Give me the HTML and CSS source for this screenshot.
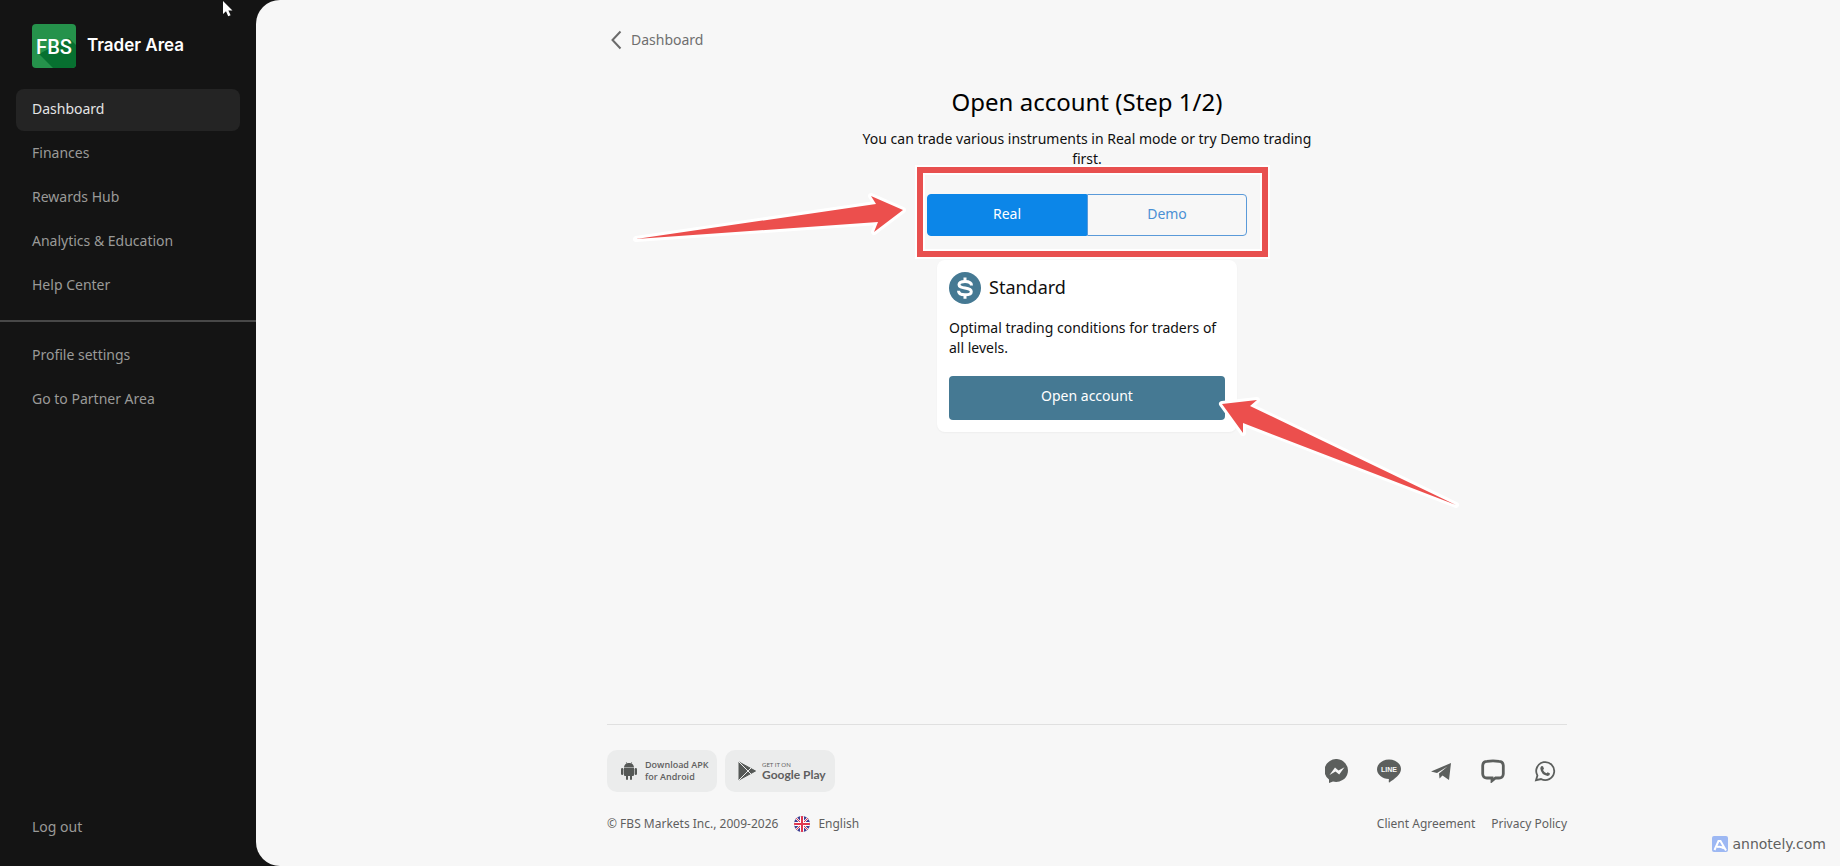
FILE: index.html
```
<!DOCTYPE html>
<html lang="en">
<head>
    <meta charset="UTF-8">
    <meta name="viewport" content="width=device-width, initial-scale=1.0">
    <title>Open account - Trader Area</title>
    <link rel="stylesheet" href="styles.css">
</head>
<body>
    <aside class="sidebar">
        <a href="#" class="brand">
            <svg class="brand-logo" viewBox="0 0 44 44">
                <rect width="44" height="44" rx="4" fill="#25924b"/>
                <path d="M7 30 L21 44 H40 a4 4 0 0 0 4-4 V21 L37 14 Z" fill="#077030"/>
                <text x="22" y="30" text-anchor="middle" class="brand-letters">FBS</text>
            </svg>
            <span class="brand-name">Trader Area</span>
        </a>
        <nav class="menu">
            <a href="#" class="active">Dashboard</a>
            <a href="#">Finances</a>
            <a href="#">Rewards Hub</a>
            <a href="#">Analytics &amp; Education</a>
            <a href="#">Help Center</a>
        </nav>
        <nav class="menu menu-secondary">
            <a href="#">Profile settings</a>
            <a href="#">Go to Partner Area</a>
        </nav>
        <nav class="menu menu-bottom">
            <a href="#">Log out</a>
        </nav>
    </aside>

    <main class="main">
        <div class="content">
            <a href="#" class="back">
                <svg width="12" height="20" viewBox="0 0 12 20" fill="none" stroke="#6b6b6b" stroke-width="2"><path d="M10.500 1.500 L2.500 10 L10.500 18.500"/></svg>
                Dashboard
            </a>

            <section class="account">
                <h1>Open account (Step 1/2)</h1>
                <p class="intro">You can trade various instruments in Real mode or try Demo trading first.</p>

                <div class="switch">
                    <button type="button" class="selected">Real</button>
                    <button type="button">Demo</button>
                    <div class="highlight"></div>
                    <svg class="arrow arrow-left" viewBox="0 0 280 60">
                        <path d="M6 48 L246 13 L241 5 L273 19 L244 41 L248 31 Z"/>
                    </svg>
                </div>

                <div class="card">
                    <h2>
                        <svg width="32" height="32" viewBox="0 0 32 32" fill="none" stroke="#fff" stroke-width="3">
                            <circle cx="16" cy="16" r="16" fill="#457993" stroke="none"/>
                            <path d="M22.500 13.500 C22.500 10.500 20.500 9.500 16 9.500 C11.800 9.500 10 10.600 10 12.700 C10 15 12.500 15.400 16 16 C20 16.600 22.300 17.200 22.300 19.700 C22.300 22 20 22.800 16 22.800 C11.500 22.800 9.500 21.800 9.500 18.800"/>
                            <path d="M16 5.500 V9.500 M16 22.500 V26.800"/>
                        </svg>
                        <span>Standard</span>
                    </h2>
                    <p>Optimal trading conditions for traders of all levels.</p>
                    <button type="button" class="open-button">Open account</button>
                    <svg class="arrow arrow-right" viewBox="0 0 250 120">
                        <path d="M6 12 L41 8 L34 14 L240 113 L27 31 L27 41 Z"/>
                    </svg>
                </div>
            </section>

            <footer class="footer">
                <div class="footer-row apps-row">
                    <div class="apps">
                        <a href="#" class="app">
                            <svg width="18" height="18" viewBox="-1 0 18 18" fill="#555856">
                                <path d="M3 5.500 C3 3.500 4.200 2 5.600 1.400 L4.800 .2 L5.200 0 L6.100 1.200 C7.300 .8 8.700 .8 9.900 1.200 L10.800 0 L11.200 .2 L10.400 1.400 C11.800 2 13 3.500 13 5.500 Z"/>
                                <path d="M3 6 H13 V13 a1 1 0 0 1-1 1 H11 V17 a1 1 0 0 1-2 0 V14 H7 V17 a1 1 0 0 1-2 0 V14 H4 a1 1 0 0 1-1-1 Z"/>
                                <rect x="0" y="6" width="2.400" height="7" rx="1.200"/>
                                <rect x="13.600" y="6" width="2.400" height="7" rx="1.200"/>
                            </svg>
                            <span class="apk-text">Download APK<br>for Android</span>
                        </a>
                        <a href="#" class="app">
                            <svg width="18" height="20" viewBox="0 0 18 20">
                                <path d="M1 1 L17.500 10 L1 19 Z" fill="#555856" stroke="#555856" stroke-linejoin="round"/>
                                <path d="M1 1 L13 13 M1 19 L13 7" stroke="#ebecec" stroke-width="1"/>
                            </svg>
                            <span class="play-text"><small>GET IT ON</small>Google Play</span>
                        </a>
                    </div>
                    <div class="social">
                        <a href="#" aria-label="Messenger">
                            <svg viewBox="0 0 24 24" fill="#5c5f5d"><path d="M12 0 a12 11.500 0 1 1-4 22.600 L4 24 V20.500 A12 11.500 0 0 1 12 0 Z"/><path d="M4.500 16 L10 8.500 L13.500 11.500 L19.500 8.200 L14.200 15.500 L10.500 12.500 Z" fill="#f7f7f7"/></svg>
                        </a>
                        <a href="#" aria-label="LINE">
                            <svg viewBox="0 0 24 24" fill="#5c5f5d"><path d="M12 .5 C18.600 .5 24 4.700 24 10 C24 15.500 17.500 20 12.300 23.400 C11.500 23.800 11.800 22 11.900 20 C5.300 20 0 15.500 0 10.300 C0 5 5.400 .5 12 .5 Z"/><text x="12" y="13" text-anchor="middle" class="line-letters">LINE</text></svg>
                        </a>
                        <a href="#" aria-label="Telegram">
                            <svg viewBox="0 0 24 24" fill="#5c5f5d"><path d="M2 12.500 L22 4 L20 21 L13.500 16.500 L10.500 19.500 L10 14.500 L18.500 7.500 L8 14 Z"/></svg>
                        </a>
                        <a href="#" aria-label="Chat">
                            <svg viewBox="0 0 24 24" fill="none" stroke="#5c5f5d" stroke-width="2.800"><path d="M6 2.400 Q12 1.500 18 2.400 Q22 2.600 22.300 6.500 V15 Q22 19 18 19 H14.500 L11 21.800 V19 H6 Q2 19 1.700 15 V6.500 Q2 2.600 6 2.400 Z"/></svg>
                        </a>
                        <a href="#" aria-label="WhatsApp">
                            <svg viewBox="0 0 24 24" fill="none" stroke="#5c5f5d" stroke-width="1.800"><path d="M3 21.200 L4.400 16.500 A9 9 0 1 1 8 20 Z"/><path d="M8.600 7 L10 7.200 L11 9.700 L10 11 Q11 13.200 13.500 14.300 L14.700 13.200 L17 14.400 Q17 16.800 14.600 17 Q8.200 15.900 7.300 9.500 Q7.400 7.500 8.600 7 Z" fill="#5c5f5d" stroke="none"/></svg>
                        </a>
                    </div>
                </div>
                <div class="footer-row">
                    <div class="legal">
                        <span>© FBS Markets Inc., 2009-2026</span>
                        <button type="button" class="language">
                            <svg width="16" height="16" viewBox="0 0 16 16">
                                <clipPath id="flag"><circle cx="8" cy="8" r="8"/></clipPath>
                                <g clip-path="url(#flag)">
                                    <rect width="16" height="16" fill="#3f3f92"/>
                                    <path d="M0 0 L16 16 M16 0 L0 16" stroke="#fff" stroke-width="2"/>
                                    <path d="M0 0 L16 16 M16 0 L0 16" stroke="#e0364f" stroke-width="1"/>
                                    <path d="M8 0 V16 M0 8 H16" stroke="#fff" stroke-width="4"/>
                                    <path d="M8 0 V16 M0 8 H16" stroke="#e0364f" stroke-width="2"/>
                                </g>
                            </svg>
                            English
                        </button>
                    </div>
                    <div class="links">
                        <a href="#">Client Agreement</a>
                        <a href="#">Privacy Policy</a>
                    </div>
                </div>
            </footer>
        </div>
    </main>

    <svg class="cursor" width="12" height="18" viewBox="0 0 12 18">
        <path d="M1 1 V14 L4 11.200 L6.200 16.300 L8.600 15.200 L6.400 10.400 H10.500 Z" fill="#fff"/>
    </svg>

    <div class="watermark">
        <svg width="16" height="16" viewBox="0 0 16 16">
            <rect width="16" height="16" rx="2" fill="#9db8f3"/>
            <path d="M2.500 14 L6.500 5 H8.500 L14 14.500 M5 11 Q9 10 12 12.500" fill="none" stroke="#fff" stroke-width="2"/>
        </svg>
        annotely.com
    </div>
</body>
</html>
```
FILE: styles.css
```
* {
    margin: 0;
    padding: 0;
    box-sizing: border-box;
}

body {
    position: relative;
    display: flex;
    min-height: 100vh;
    background: #141414;
    color: #0f0f0f;
    font-family: "Noto Sans", sans-serif;
    font-size: 14px;
    line-height: 20px;
}

a {
    color: inherit;
    text-decoration: none;
}

button {
    border: none;
    background: none;
    font: inherit;
    color: inherit;
    cursor: pointer;
}

/* Sidebar */
.sidebar {
    display: flex;
    flex-direction: column;
    flex: 0 0 256px;
    padding: 24px 0 17px;
}

.brand {
    display: flex;
    align-items: center;
    gap: 11px;
    padding: 0 32px;
    margin-bottom: 21px;
}

.brand-logo {
    width: 44px;
    height: 44px;
}

.brand-letters {
    font: 500 20px Roboto, sans-serif;
    fill: #fff;
}

.brand-name {
    padding-bottom: 2px;
    color: #fff;
    font-family: Inter, sans-serif;
    font-size: 17px;
    font-weight: 600;
}

.menu {
    display: flex;
    flex-direction: column;
    gap: 2px;
    padding: 0 16px;
}

.menu a {
    padding: 10px 16px 12px;
    border-radius: 8px;
    color: #9a9a98;
}

.menu a.active {
    background: #242424;
    color: #e4e4e4;
}

.menu-secondary {
    margin-top: 13px;
    padding-top: 13px;
    border-top: 2px solid #484848;
}

.menu-bottom {
    margin-top: auto;
}

/* Main area */
.main {
    display: flex;
    justify-content: center;
    flex: 1;
    padding: 30px 26px 32px 104px;
    border-radius: 24px 0 0 24px;
    background: #f7f7f7;
}

.content {
    display: flex;
    flex-direction: column;
    width: 100%;
    max-width: 960px;
}

.back {
    display: flex;
    align-items: center;
    align-self: flex-start;
    gap: 9px;
    padding-left: 3px;
    color: #6f6f6f;
}

.account {
    display: flex;
    flex-direction: column;
    align-items: center;
    padding: 36px 0;
}

.account h1 {
    color: #000;
    font-size: 24px;
    font-weight: 400;
    line-height: 32px;
    margin-bottom: 11px;
}

.intro {
    max-width: 480px;
    text-align: center;
}

.switch {
    position: relative;
    display: flex;
    width: 320px;
    margin: 25px 0 24px;
}

.switch button {
    flex: 1;
    height: 42px;
    padding-bottom: 2px;
    border: 1px solid #5a9ad9;
    border-radius: 0 4px 4px 0;
    color: #4a8fd4;
}

.switch button.selected {
    border-color: #0c86e8;
    border-radius: 4px 0 0 4px;
    background: #0c86e8;
    color: #fff;
}

.card {
    position: relative;
    width: 300px;
    padding: 12px;
    border-radius: 8px;
    background: #fff;
    box-shadow: 0 1px 2px rgba(0, 0, 0, 0.04);
}

.card h2 {
    display: flex;
    align-items: center;
    gap: 8px;
    margin-bottom: 14px;
    font-size: 18px;
    font-weight: 400;
}

.card h2 span {
    padding-bottom: 2px;
}

.open-button {
    display: block;
    width: 100%;
    height: 44px;
    margin-top: 18px;
    padding-bottom: 4px;
    border-radius: 4px;
    background: #457993;
    color: #fff;
}

/* Marks drawn over the page */
.highlight {
    position: absolute;
    top: -27px;
    left: -10px;
    width: 351px;
    height: 90px;
    border: 6px solid #e8504f;
    outline: 2px solid #fff;
    box-shadow: inset 0 0 0 2px #fff;
    pointer-events: none;
}

.arrow {
    position: absolute;
    overflow: visible;
    pointer-events: none;
}

.arrow path {
    fill: #ec4f4d;
    stroke: #fff;
    stroke-width: 6;
    stroke-linejoin: round;
    paint-order: stroke;
}

.arrow-left {
    top: -3px;
    left: -297px;
    width: 280px;
    height: 60px;
}

.arrow-right {
    top: 132px;
    left: 279px;
    width: 250px;
    height: 120px;
}

/* Footer */
.footer {
    margin-top: auto;
    padding-top: 25px;
    border-top: 1px solid #e0e0e0;
    color: #5f5f5f;
    font-size: 12px;
}

.footer-row {
    display: flex;
    justify-content: space-between;
    align-items: center;
}

.apps-row {
    margin-bottom: 22px;
}

.apps {
    display: flex;
    gap: 8px;
}

.app {
    display: flex;
    align-items: center;
    gap: 6px;
    width: 110px;
    height: 42px;
    padding-left: 13px;
    border-radius: 10px;
    background: #ebecec;
    white-space: nowrap;
}

.apk-text {
    padding-left: 1px;
    font-family: "Open Sans", sans-serif;
    font-size: 9px;
    font-weight: 600;
    line-height: 12px;
}

.play-text {
    font-family: Lato, sans-serif;
    font-size: 12px;
    font-weight: 700;
    line-height: 14px;
}

.play-text small {
    display: block;
    font-size: 6px;
    font-weight: 400;
    line-height: 7px;
}

.social {
    display: flex;
    gap: 28px;
    padding-right: 10px;
}

.social svg {
    display: block;
    width: 24px;
    height: 24px;
}

.line-letters {
    font: bold 7px "Liberation Sans", sans-serif;
    fill: #f7f7f7;
}

.legal,
.links {
    display: flex;
    gap: 16px;
}

.language {
    display: flex;
    align-items: center;
    gap: 8px;
}

.cursor {
    position: absolute;
    top: 0;
    left: 222px;
}

.watermark {
    position: absolute;
    right: 14px;
    bottom: 12px;
    display: flex;
    align-items: center;
    gap: 4px;
    color: #5f5f5f;
    font-family: "DejaVu Sans", sans-serif;
    font-size: 14px;
}
```
